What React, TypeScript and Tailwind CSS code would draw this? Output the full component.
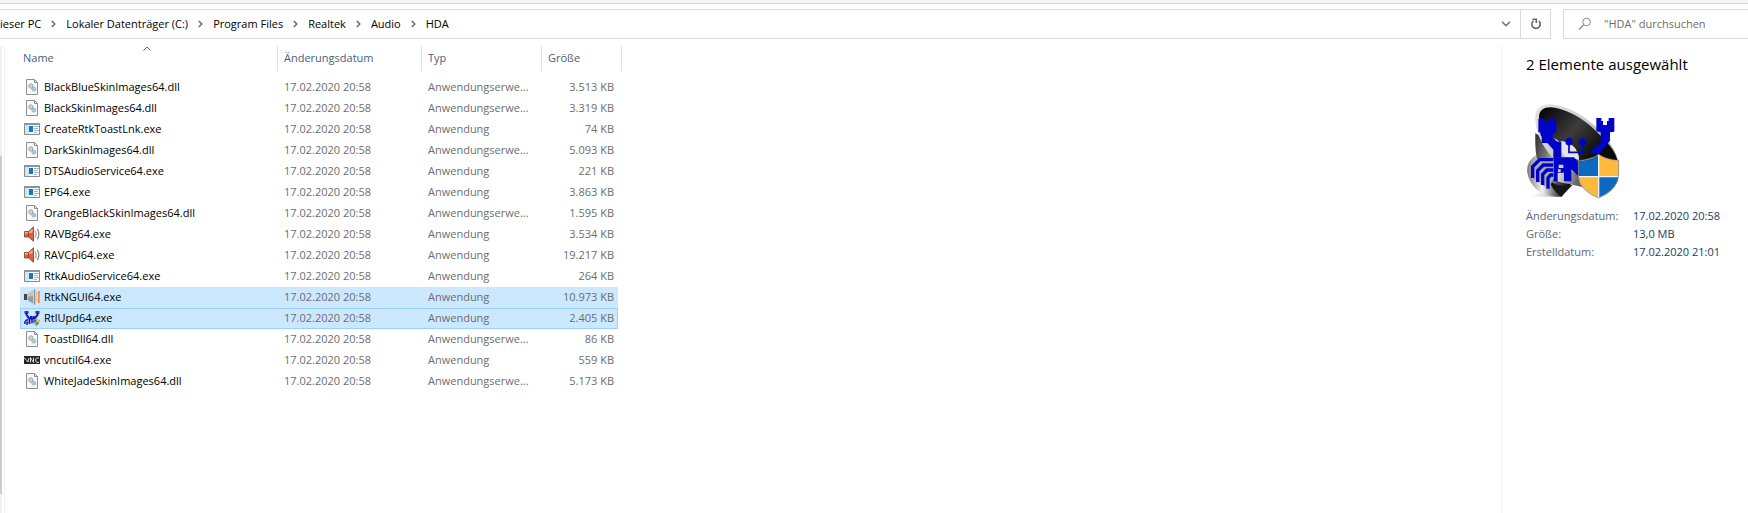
import { ChevronDown } from "lucide-react";
import clsx from "clsx";

type IconKind = "dll" | "app" | "speaker" | "audio" | "crab" | "vnc";

interface FileEntry {
  name: string;
  kind: IconKind;
  type: string;
  size: string;
}

const DATE = "17.02.2020 20:58";
const EXT = "Anwendungserwe...";
const APP = "Anwendung";

const files: FileEntry[] = [
  { name: "BlackBlueSkinImages64.dll", kind: "dll", type: EXT, size: "3.513 KB" },
  { name: "BlackSkinImages64.dll", kind: "dll", type: EXT, size: "3.319 KB" },
  { name: "CreateRtkToastLnk.exe", kind: "app", type: APP, size: "74 KB" },
  { name: "DarkSkinImages64.dll", kind: "dll", type: EXT, size: "5.093 KB" },
  { name: "DTSAudioService64.exe", kind: "app", type: APP, size: "221 KB" },
  { name: "EP64.exe", kind: "app", type: APP, size: "3.863 KB" },
  { name: "OrangeBlackSkinImages64.dll", kind: "dll", type: EXT, size: "1.595 KB" },
  { name: "RAVBg64.exe", kind: "speaker", type: APP, size: "3.534 KB" },
  { name: "RAVCpl64.exe", kind: "speaker", type: APP, size: "19.217 KB" },
  { name: "RtkAudioService64.exe", kind: "app", type: APP, size: "264 KB" },
  { name: "RtkNGUI64.exe", kind: "audio", type: APP, size: "10.973 KB" },
  { name: "RtlUpd64.exe", kind: "crab", type: APP, size: "2.405 KB" },
  { name: "ToastDll64.dll", kind: "dll", type: EXT, size: "86 KB" },
  { name: "vncutil64.exe", kind: "vnc", type: APP, size: "559 KB" },
  { name: "WhiteJadeSkinImages64.dll", kind: "dll", type: EXT, size: "5.173 KB" },
];

const selected = ["RtkNGUI64.exe", "RtlUpd64.exe"];
const focused = "RtlUpd64.exe";

const crumbs = ["ieser PC", "Lokaler Datenträger (C:)", "Program Files", "Realtek", "Audio", "HDA"];

const details = [
  { label: "Änderungsdatum:", value: "17.02.2020 20:58" },
  { label: "Größe:", value: "13,0 MB" },
  { label: "Erstelldatum:", value: "17.02.2020 21:01" },
];

function FileIcon({ kind }: { kind: IconKind }) {
  const props = { viewBox: "0 0 16 16", className: "size-4 shrink-0", "aria-hidden": true };
  switch (kind) {
    case "dll":
      return (
        <svg {...props}>
          <path d="M2.5.5h8l3 3v12h-11z" fill="#fafafa" stroke="#8f8f8f" />
          <path d="M10.5.5v3h3" fill="none" stroke="#8f8f8f" />
          <circle cx="6.8" cy="7" r="2.1" fill="#f2f4f6" stroke="#8d9aa8" />
          <circle cx="6.8" cy="7" r=".8" fill="#8d9aa8" />
          <circle cx="9.8" cy="10.2" r="1.9" fill="#d5e8f5" stroke="#86acc9" />
          <circle cx="9.8" cy="10.2" r=".7" fill="#6f9cbd" />
        </svg>
      );
    case "app":
      return (
        <svg {...props}>
          <path d="M.5 2.5h15v11H.5z" fill="#fff" stroke="#8a8a8a" />
          <path d="M0 2h16v2H0z" fill="#8f9499" />
          <path d="M1 4h4v9H1z" fill="#cfe6f5" />
          <path d="M5 5h4v6H5z" fill="#1277c4" />
          <path d="M10 5.5h5M10 7.5h4M10 9.5h5M10 11.5h3" stroke="#9fb4c6" />
        </svg>
      );
    case "speaker":
      return (
        <svg {...props}>
          <path d="M.5 5.5h4L9.5.8v14.4L4.5 11h-4z" fill="#d9623f" stroke="#8a3a26" strokeWidth=".8" />
          <path d="M1 6h3.8L8.6 2.4v4L1 8z" fill="#f3a98a" />
          <path d="M4.5 5.5V11" stroke="#7b2f20" strokeWidth=".7" />
          <path d="M11 4.5q2.2 3.4 0 7" fill="none" stroke="#a8a094" strokeWidth="1.2" />
          <path d="M13.3 2.8q3.2 5.2 0 10.4" fill="none" stroke="#8c8475" strokeWidth="1.2" />
        </svg>
      );
    case "audio":
      return (
        <svg {...props}>
          <path d="M0 5h3v6H0z" fill="#454545" />
          <path d="M3.5 5 9 1.5v13L3.5 11z" fill="#9b9b9b" />
          <path d="M3.5 5 9 1.5V7L3.5 8z" fill="#c6c4c1" />
          <path d="M10.5.5v15" stroke="#8a8f94" strokeWidth="1.4" />
          <path d="M12.5 3v10" stroke="#d9c4b6" />
          <path d="M14.8 2v12" stroke="#f08a45" strokeWidth="1.8" />
        </svg>
      );
    case "crab":
      return (
        <svg {...props}>
          <path d="M4 7h7l-2 7H1l1-4z" fill="#a9b4cc" />
          <path
            d="M2.5 1v4L5 8M13.500 1v4L11 8M4.500 8.500h7M7 6v2M9.500 6v2"
            fill="none"
            stroke="#1219c4"
            strokeWidth="2"
          />
          <path d="M1 1v2.500h3V1M12 1v2.500h3V1" fill="none" stroke="#1219c4" />
          <path d="M5.500 9v5M8 9v4M4 10H2.500L.8 12v2M4 12l-1 1v2" fill="none" stroke="#1219c4" strokeWidth="1.4" />
          <path d="M9 10q2.500 0 3.300-.8.8.8 3.200.8 0 4-3.200 5.800Q9 14 9 10z" fill="#2474c4" />
          <path d="M12.300 9.200q.8.800 3.200.8v2.500h-3.200zM9.400 12.500h2.900v3.300q-2.300-1.500-2.900-3.300z" fill="#f2bd3c" />
        </svg>
      );
    case "vnc":
      return (
        <svg {...props}>
          <path d="M0 4h16v8H0z" fill="#262626" />
          <path
            d="M0 6l2 1.500L4 10l1-4M6.500 10.500v-5l3 5v-5M15 6q-3.500-1-3.500 2t3.500 2.500"
            fill="none"
            stroke="#e6e6e6"
            strokeWidth=".9"
          />
        </svg>
      );
  }
}

function PreviewIcon() {
  return (
    <svg viewBox="105 69 282 288" className="h-24 w-[94px]" aria-hidden="true">
      <defs>
        <linearGradient id="rim" x1="0" y1="0" x2="1" y2="1">
          <stop offset="0" stopColor="#e4e4e4" />
          <stop offset=".4" stopColor="#cfcfcf" />
          <stop offset="1" stopColor="#8b8b8b" />
        </linearGradient>
        <linearGradient id="cone" x1="0" y1="0" x2="1" y2=".7">
          <stop offset="0" stopColor="#000" />
          <stop offset=".5" stopColor="#3c3c3c" />
          <stop offset="1" stopColor="#000" />
        </linearGradient>
        <linearGradient id="horn" x1="0" y1="0" x2="1" y2=".3">
          <stop offset="0" stopColor="#2b2b2b" />
          <stop offset=".3" stopColor="#777" />
          <stop offset=".6" stopColor="#e6e6e6" />
          <stop offset="1" stopColor="#666" />
        </linearGradient>
        <linearGradient id="base" x1="0" y1="0" x2="1" y2="0">
          <stop offset="0" stopColor="#7b7b7b" />
          <stop offset=".35" stopColor="#f2f2f2" />
          <stop offset=".7" stopColor="#4b4b4b" />
          <stop offset="1" stopColor="#000" />
        </linearGradient>
        <linearGradient id="shadow" x1="0" y1="0" x2="1" y2="0">
          <stop offset="0" stopColor="#ddd" stopOpacity="0" />
          <stop offset="1" stopColor="#888" />
        </linearGradient>
      </defs>
      <path d="M118 345q40-14 88-6v11h-88z" fill="url(#shadow)" />
      <path d="M135 225q-28 18-27 48 4 40 42 66 20 11 62 11l28-38-20-60z" fill="url(#base)" />
      <path d="M133 160q-2 70 12 100 32 45 90 52l50 12-40-100z" fill="url(#horn)" />
      <path d="M175 300q25 25 70 14l-34 36q-30-20-36-50z" fill="#161616" />
      {/* cone with its bright rim */}
      <path d="M133 120c-4-34 20-52 58-46 66 10 146 70 180 140 14 26 14 60 8 80l-112-11c-60-17-126-75-134-163z" fill="url(#rim)" />
      <path d="M144 112c0-26 22-34 52-28 60 12 130 66 166 128l-28 42-104-18-30-56-20-10-12-30q-22 4-24-28z" fill="url(#cone)" />
      <path d="M340 180q30 28 40 62-30-2-54-18z" fill="#0a0a0a" />
      <path d="M188 190l22-6q22-2 42 20 14 20 12 36l-40-8z" fill="#e4e4ea" />
      {/* claws and arms */}
      <path d="M142 116h21v14h9v-8l6-8h12v9h6v34l-12 5-6 7h-28l-3-12h-5z" fill="#0003c8" />
      <path d="M152 155h33v17l14 13h12v48h-24v-24l-18-20h-17z" fill="#0003c8" />
      <path d="M316 114h15v9h5v12h12v-12h5v-9h17v41l-13 2h-27l-14-3z" fill="#0003c8" />
      <path d="M329 152h28v30l-32 39h-26v-9l30-23z" fill="#0003c8" />
      {/* eyes */}
      <path d="M234 193v24h41v-24" fill="none" stroke="#0003c8" strokeWidth="5" />
      <circle cx="234" cy="185" r="11" fill="#0003c8" />
      <circle cx="275" cy="186" r="11" fill="#0003c8" />
      {/* body */}
      <path d="M187 232h62l22 24v30h-12l-18-18v36h-22v-26h-19v26h-13z" fill="#0003c8" />
      <path d="M203 254h14v10h-14zM201 268h8v8h-8z" fill="#d2d2da" />
      {/* legs */}
      <path d="M122 236h66v60l-16 30-48-32z" fill="#a9a9b0" />
      <path
        d="M187 239h-41l-21 21v34M187 255h-30l-17 17v34M187 270h-19l-13 13v32M187 285h-8l-8 9v32"
        fill="none"
        stroke="#0003c8"
        strokeWidth="10"
      />
      {/* shield */}
      <path d="M262 242q40-4 61-19 24 17 60 18v44q-2 46-60 69-60-24-61-67z" fill="#f4f4f4" />
      <path d="M263 243q36-3 58-18v63h-58z" fill="#0d68bf" />
      <path d="M325 225q22 16 57 17v46h-57z" fill="#fdb93a" />
      <path d="M263 292h58v60q-51-22-58-60z" fill="#fdb93a" />
      <path d="M325 292h57q-7 38-57 60z" fill="#0d68bf" />
      <path d="M262 242q40-4 61-19 24 17 60 18v44q-2 46-60 69-60-24-61-67z" fill="none" stroke="#6f654c" strokeWidth="2" />
    </svg>
  );
}

function AddressBar() {
  return (
    <div className="flex h-[30px] gap-3">
      <div className="flex min-w-0 flex-1 border border-l-0 border-[#d9d9d9]">
        <nav className="flex min-w-0 flex-1 items-center whitespace-nowrap">
          {crumbs.map((crumb, i) => (
            <span key={crumb} className="flex items-center">
              {i > 0 && (
                <svg viewBox="0 0 5 8" className="mx-2.5 h-2 w-[5px]" aria-hidden="true">
                  <path d="M.8 1 3.8 4l-3 3" fill="none" stroke="#666" strokeWidth="1.4" />
                </svg>
              )}
              <a href="#" className="text-black">
                {crumb}
              </a>
            </span>
          ))}
        </nav>
        <button type="button" aria-label="Vorherige Orte" className="flex w-7 items-center justify-center">
          <ChevronDown className="size-3.5 text-[#777]" strokeWidth={3} />
        </button>
        <button
          type="button"
          aria-label="Aktualisieren"
          className="flex w-[30px] items-center justify-center border-l border-[#d9d9d9]"
        >
          <svg viewBox="0 0 12 12" className="size-3" aria-hidden="true">
            <path d="M3.5 2.8A4.200 4.200 0 1 0 8.800 3" fill="none" stroke="#666" strokeWidth="1.6" />
            <path d="M2.5 1.200h3.800v3.800" fill="none" stroke="#666" strokeWidth="1.6" />
          </svg>
        </button>
      </div>
      <label className="flex w-[185px] items-center border border-r-0 border-[#d9d9d9] pl-3.5">
        <svg viewBox="0 0 14 14" className="size-3.5 shrink-0" aria-hidden="true">
          <circle cx="8.5" cy="5" r="3.8" fill="none" stroke="#8a8a8a" />
          <path d="M5.800 7.800 1 12.500" stroke="#8a8a8a" strokeWidth="1.2" />
        </svg>
        <input
          type="search"
          aria-label="Suchen"
          placeholder={'"HDA" durchsuchen'}
          className="ml-3 w-full min-w-0 outline-none placeholder:text-[#6d6d6d]"
        />
      </label>
    </div>
  );
}

function FileTable() {
  const th = "h-[25px] border-r border-[#e2e2e2] pb-px pl-1.5 text-left font-normal";
  return (
    <table className="w-[602px] table-fixed border-separate border-spacing-0">
      <colgroup>
        <col className="w-[258px]" />
        <col className="w-36" />
        <col className="w-[120px]" />
        <col className="w-[76px]" />
        <col className="w-1" />
      </colgroup>
      <thead className="text-[#4c607a]">
        <tr>
          <th className={clsx(th, "relative pl-[3px]")}>
            Name
            <svg viewBox="0 0 8 5" className="absolute top-0 left-[123px] h-[5px] w-2" aria-hidden="true">
              <path d="M.5 4.500 4 1l3.500 3.500" fill="none" stroke="#666" />
            </svg>
          </th>
          <th className={th}>Änderungsdatum</th>
          <th className={th}>Typ</th>
          <th className={th} colSpan={2}>
            Größe
          </th>
        </tr>
        <tr className="h-1.5" />
      </thead>
      <tbody className="leading-4 text-[#6d6d6d]">
        {files.map((file) => {
          const td = clsx(
            "h-[21px] border-y pb-0.5 pl-1.5 whitespace-nowrap",
            selected.includes(file.name) ? "bg-[#cce8ff]" : "bg-white",
            file.name === focused ? "border-[#99d1ff]" : "border-transparent",
          );
          return (
            <tr key={file.name}>
              <td className={clsx(td, "border-l pl-[3px]")}>
                <div className="flex items-center gap-1 text-black">
                  <FileIcon kind={file.kind} />
                  {file.name}
                </div>
              </td>
              <td className={td}>{DATE}</td>
              <td className={td}>{file.type}</td>
              <td className={clsx(td, "border-r pr-[3px] text-right")}>{file.size}</td>
            </tr>
          );
        })}
      </tbody>
    </table>
  );
}

function DetailsPane() {
  return (
    <aside className="w-[247px] border-l border-[#f0f0f0] pl-6">
      <h2 className="mt-1.5 text-[15px] leading-6 text-black">2 Elemente ausgewählt</h2>
      <div className="mt-[27px]">
        <PreviewIcon />
      </div>
      <dl className="mt-2 grid grid-cols-[107px_1fr]">
        {details.map((d) => (
          <div key={d.label} className="contents">
            <dt className="text-[#5a6779]">{d.label}</dt>
            <dd className="text-[#1e395b]">{d.value}</dd>
          </div>
        ))}
      </dl>
    </aside>
  );
}

export default function App() {
  return (
    <div className="flex min-h-screen flex-col bg-white font-['Open_Sans',sans-serif] text-[11px] leading-[18px]">
      <div className="mb-[5px] h-1 border-b border-[#d9d9d9] bg-[#f5f5f5]" />
      <AddressBar />
      <div className="mt-[7px] flex flex-1">
        <div className="flex w-[5px] border-r border-[#f3f3f3]">
          <div className="flex w-0.5 flex-col bg-[#f0f0f0]">
            <div className="mt-[110px] h-[338px] bg-[#cdcdcd]" />
          </div>
        </div>
        <main className="min-w-0 flex-1 pl-[15px]">
          <FileTable />
        </main>
        <DetailsPane />
      </div>
    </div>
  );
}
